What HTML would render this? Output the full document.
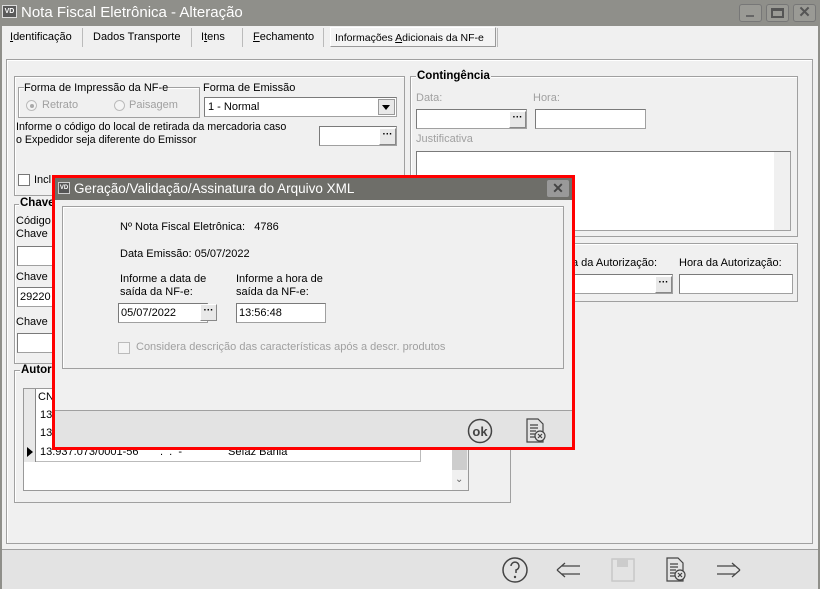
<!DOCTYPE html>
<html><head><meta charset="utf-8"><style>
*{box-sizing:border-box;margin:0;padding:0}
body{width:820px;height:589px;overflow:hidden;background:#f0f0f0;font-family:"Liberation Sans",sans-serif;font-size:11px;color:#000;position:relative}
.a{position:absolute}
.gb{position:absolute;border:1px solid #a0a0a0;box-shadow:inset 1px 1px 0 #fff}
.lg{position:absolute;background:#f0f0f0;font-weight:bold;font-size:11.5px;padding:0 1px}
.in{position:absolute;background:#fff;border:1px solid #a0a0a0;border-top-color:#7a7a7a;border-left-color:#7a7a7a}
.btn{position:absolute;width:17px;height:17px;background:#e8e8e8;border:1px solid #888;border-top-color:#fff;border-left-color:#fff;font-size:10px;font-weight:bold;text-align:center;line-height:11px}
.t{position:absolute;white-space:nowrap;font-size:11px}
.gr{color:#a0a0a0}
</style></head><body>
<div class="a" style="left:0;top:0;width:820px;height:26px;background:#8f8f8a"></div>
<div class="a" style="left:2px;top:5px;width:15px;height:13px;background:#5a5a5a;border:1px solid #ddd;color:#fff;font-size:7px;font-weight:bold;text-align:center;line-height:11px">VD</div>
<div class="t" style="left:21px;top:4px;font-size:15px;color:#fff">Nota Fiscal Eletrônica - Alteração</div>
<div class="a" style="left:739px;top:4px;width:23px;height:18px;border:1px solid #777;border-radius:3px;background:#9a9a95"></div>
<div class="a" style="left:746px;top:15px;width:8px;height:2px;background:#666"></div>
<div class="a" style="left:766px;top:4px;width:23px;height:18px;border:1px solid #777;border-radius:3px;background:#9a9a95"></div>
<div class="a" style="left:771px;top:8px;width:13px;height:10px;border:2px solid #555;border-top-width:3px"></div>
<div class="a" style="left:793px;top:4px;width:23px;height:18px;border:1px solid #777;border-radius:3px;background:#9a9a95;color:#555;font-weight:bold;font-size:15px;text-align:center;line-height:16px">✕</div>
<div class="a" style="left:0;top:26px;width:2px;height:563px;background:#8f8f8a"></div>
<div class="a" style="left:818px;top:26px;width:2px;height:563px;background:#8f8f8a"></div>
<!-- tabs -->
<div class="t" style="left:10px;top:31px"><u>I</u>dentificação</div>
<div class="a" style="left:82px;top:28px;width:1px;height:19px;background:#bbb"></div>
<div class="t" style="left:93px;top:31px">Dados Transporte</div>
<div class="a" style="left:191px;top:28px;width:1px;height:19px;background:#bbb"></div>
<div class="t" style="left:201px;top:31px">I<u>t</u>ens</div>
<div class="a" style="left:242px;top:28px;width:1px;height:19px;background:#bbb"></div>
<div class="t" style="left:253px;top:31px"><u>F</u>echamento</div>
<div class="a" style="left:323px;top:28px;width:1px;height:19px;background:#bbb"></div>
<div class="a" style="left:330px;top:27px;width:166px;height:20px;border:1px solid #999;border-top-color:#fff;border-left-color:#fff;background:#f4f4f4"></div>
<div class="t" style="left:335px;top:32px;font-size:10.5px">Informações <u>A</u>dicionais da NF-e</div>
<div class="a" style="left:497px;top:28px;width:1px;height:19px;background:#bbb"></div>
<div class="gb" style="left:6px;top:59px;width:807px;height:485px"></div>
<div class="gb" style="left:14px;top:76px;width:391px;height:120px"></div>
<div class="gb" style="left:18px;top:87px;width:182px;height:31px"></div>
<div class="t" style="left:24px;top:82px;background:#f0f0f0">Forma de Impressão da NF-e</div>
<div class="a" style="left:26px;top:100px;width:11px;height:11px;border:1px solid #bbb;border-radius:50%;background:#f4f4f4"></div>
<div class="a" style="left:30px;top:104px;width:4px;height:4px;border-radius:50%;background:#aaa"></div>
<div class="t gr" style="left:42px;top:99px">Retrato</div>
<div class="a" style="left:114px;top:100px;width:11px;height:11px;border:1px solid #bbb;border-radius:50%;background:#f4f4f4"></div>
<div class="t gr" style="left:129px;top:99px">Paisagem</div>
<div class="t" style="left:203px;top:82px">Forma de Emissão</div>
<div class="in" style="left:204px;top:97px;width:193px;height:20px"></div>
<div class="t" style="left:208px;top:101px">1 - Normal</div>
<div class="a" style="left:378px;top:99px;width:17px;height:16px;background:#e8e8e8;border:1px solid #999"></div>
<div class="a" style="left:382px;top:105px;border-left:4px solid transparent;border-right:4px solid transparent;border-top:5px solid #000"></div>
<div class="t" style="left:16px;top:121px;line-height:13px;font-size:10.7px">Informe o código do local de retirada da mercadoria caso<br>o Expedidor seja diferente do Emissor</div>
<div class="in" style="left:319px;top:126px;width:78px;height:20px"></div>
<div class="btn" style="left:379px;top:128px">···</div>
<div class="a" style="left:18px;top:174px;width:12px;height:12px;border:1px solid #777;background:#fff"></div>
<div class="t" style="left:34px;top:174px">Incl</div>
<div class="gb" style="left:14px;top:204px;width:45px;height:160px"></div>
<div class="lg" style="left:19px;top:197px">Chave</div>
<div class="t" style="left:16px;top:215px;line-height:13px">Código<br>Chave</div>
<div class="in" style="left:17px;top:246px;width:40px;height:20px"></div>
<div class="t" style="left:16px;top:271px">Chave</div>
<div class="in" style="left:17px;top:287px;width:40px;height:20px"></div>
<div class="t" style="left:20px;top:291px">29220</div>
<div class="t" style="left:16px;top:316px">Chave</div>
<div class="in" style="left:17px;top:333px;width:40px;height:20px"></div>
<div class="gb" style="left:14px;top:370px;width:497px;height:133px"></div>
<div class="lg" style="left:20px;top:364px">Autor</div>
<div class="a" style="left:23px;top:388px;width:446px;height:103px;background:#fff;border:1px solid #999"></div>
<div class="a" style="left:24px;top:389px;width:12px;height:73px;background:#e8e8e8;border-right:1px solid #888"></div>
<div class="a" style="left:36px;top:389px;width:385px;height:73px;border-right:1px solid #bbb;border-bottom:1px solid #bbb"></div>
<div class="t" style="left:38px;top:391px">CN</div>
<div class="t" style="left:40px;top:409px">13</div>
<div class="t" style="left:40px;top:427px">13</div>
<div class="t" style="left:40px;top:446px">13.937.073/0001-56</div>
<div class="t" style="left:160px;top:446px">. &nbsp;. &nbsp;-</div>
<div class="t" style="left:228px;top:446px">Sefaz Bahia</div>
<div class="a" style="left:27px;top:447px;border-top:5px solid transparent;border-bottom:5px solid transparent;border-left:6px solid #000"></div>
<div class="a" style="left:452px;top:389px;width:16px;height:101px;background:#f0f0f0"></div>
<div class="a" style="left:452px;top:440px;width:15px;height:30px;background:#cdcdcd"></div>
<div class="t" style="left:455px;top:474px;font-size:10px;color:#666">⌄</div>
<div class="gb" style="left:410px;top:76px;width:388px;height:161px"></div>
<div class="lg" style="left:416px;top:70px">Contingência</div>
<div class="t gr" style="left:416px;top:92px">Data:</div>
<div class="t gr" style="left:533px;top:92px">Hora:</div>
<div class="in" style="left:416px;top:109px;width:111px;height:20px"></div>
<div class="btn" style="left:509px;top:111px">···</div>
<div class="in" style="left:535px;top:109px;width:111px;height:20px"></div>
<div class="t gr" style="left:416px;top:133px">Justificativa</div>
<div class="in" style="left:416px;top:151px;width:375px;height:80px"></div>
<div class="a" style="left:774px;top:152px;width:16px;height:78px;background:#f0f0f0"></div>
<div class="gb" style="left:410px;top:243px;width:388px;height:59px"></div>
<div class="t" style="left:572px;top:257px">a da Autorização:</div>
<div class="t" style="left:679px;top:257px">Hora da Autorização:</div>
<div class="in" style="left:560px;top:274px;width:113px;height:20px"></div>
<div class="btn" style="left:655px;top:276px">···</div>
<div class="in" style="left:679px;top:274px;width:114px;height:20px"></div>
<div class="a" style="left:2px;top:549px;width:816px;height:40px;background:#e3e3e3;border-top:1px solid #a0a0a0"></div>
<svg class="a" style="left:500px;top:555px" width="260" height="30" viewBox="0 0 260 30">
<g fill="none" stroke="#444" stroke-width="1.5">
<circle cx="15" cy="15" r="12"/>
<path d="M11 11a4 4 0 1 1 5 4v3"/>
<path d="M57 15l8-7M57 15l8 7M62 11h18M62 19h18" stroke-width="1.2"/>
<path d="M217 11h18M217 19h18M240 15l-8-7M240 15l-8 7" stroke-width="1.2"/>
</g>
<circle cx="15" cy="22" r="1.2" fill="#444"/>
<rect x="112" y="4" width="22" height="22" fill="none" stroke="#c8c8c8" stroke-width="1.5"/>
<rect x="117" y="4" width="11" height="8" fill="#ccc"/>
<g stroke="#444" fill="none" stroke-width="1.2"><path d="M167 3h11l5 5v18h-16z"/><path d="M170 9h8M170 12h8M170 15h6M170 18h5M170 21h5"/><circle cx="180" cy="20" r="5" fill="#e3e3e3"/><path d="M178 18l4 4M182 18l-4 4"/></g>
</svg>
<div class="a" style="left:52px;top:175px;width:523px;height:275px;border:3px solid #f00;background:#f0f0f0"></div>
<div class="a" style="left:55px;top:178px;width:517px;height:22px;background:#6e6e69"></div>
<div class="a" style="left:58px;top:182px;width:12px;height:12px;background:#555;border:1px solid #ccc;color:#fff;font-size:6px;font-weight:bold;text-align:center;line-height:10px">VD</div>
<div class="t" style="left:74px;top:181px;font-size:13.5px;color:#fff">Geração/Validação/Assinatura do Arquivo XML</div>
<div class="a" style="left:547px;top:180px;width:22px;height:17px;background:#999;border-radius:2px;color:#444;font-weight:bold;font-size:14px;text-align:center;line-height:17px">✕</div>
<div class="gb" style="left:62px;top:206px;width:502px;height:163px"></div>
<div class="t" style="left:120px;top:221px">Nº Nota Fiscal Eletrônica: &nbsp;&nbsp;4786</div>
<div class="t" style="left:120px;top:248px">Data Emissão: 05/07/2022</div>
<div class="t" style="left:120px;top:273px;line-height:13px">Informe a data de<br>saída da NF-e:</div>
<div class="t" style="left:236px;top:273px;line-height:13px">Informe a hora de<br>saída da NF-e:</div>
<div class="in" style="left:118px;top:303px;width:90px;height:20px"></div>
<div class="t" style="left:121px;top:307px">05/07/2022</div>
<div class="btn" style="left:200px;top:304px">···</div>
<div class="in" style="left:236px;top:303px;width:90px;height:20px"></div>
<div class="t" style="left:239px;top:307px">13:56:48</div>
<div class="a" style="left:118px;top:342px;width:12px;height:12px;border:1px solid #bbb;background:#f4f4f4"></div>
<div class="t gr" style="left:136px;top:341px">Considera descrição das características após a descr. produtos</div>
<div class="a" style="left:55px;top:410px;width:517px;height:37px;background:#e3e3e3;border-top:1px solid #a0a0a0"></div>
<svg class="a" style="left:460px;top:416px" width="100" height="30" viewBox="0 0 100 30">
<circle cx="20" cy="15" r="11.5" fill="none" stroke="#444" stroke-width="1.5"/>
<text x="20" y="20" text-anchor="middle" font-family="Liberation Sans" font-weight="bold" font-size="13" fill="#444">ok</text>
<g stroke="#444" fill="none" stroke-width="1.2"><path d="M67 3h11l5 5v18h-16z"/><path d="M70 9h8M70 12h8M70 15h6M70 18h5M70 21h5"/><circle cx="80" cy="20" r="5" fill="#e3e3e3"/><path d="M78 18l4 4M82 18l-4 4"/></g>
</svg>
</body></html>
